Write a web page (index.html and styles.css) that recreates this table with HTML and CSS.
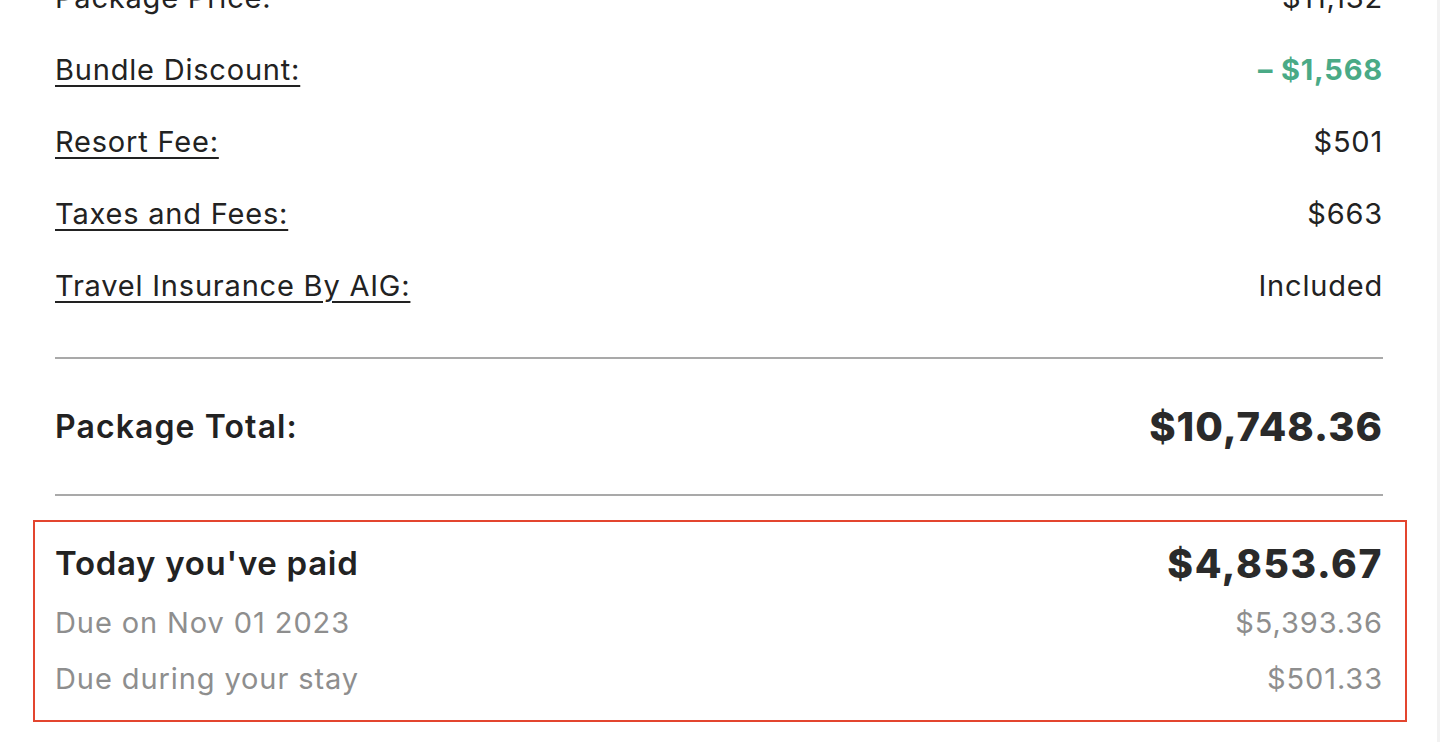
FILE: index.html
```
<!DOCTYPE html>
<html lang="en">
<head>
  <meta charset="UTF-8">
  <title>Package Summary</title>
  <link rel="stylesheet" href="styles.css">
</head>
<body>
  <div class="summary">
    <div class="lines">
      <div class="line"><span class="label plain">Package Price:</span><span>$11,132</span></div>
      <div class="line"><a class="label" href="#">Bundle Discount:</a><span class="discount">&ndash; $1,568</span></div>
      <div class="line"><a class="label" href="#">Resort Fee:</a><span>$501</span></div>
      <div class="line"><a class="label" href="#">Taxes and Fees:</a><span>$663</span></div>
      <div class="line"><a class="label" href="#">Travel Insurance By AIG:</a><span>Included</span></div>
    </div>

    <div class="total">
      <span class="total-label">Package Total:</span>
      <span class="total-amount">$10,748.36</span>
    </div>

    <div class="paid-box">
      <div class="paid-row">
        <span class="paid-label">Today you've paid</span>
        <span class="paid-amount">$4,853.67</span>
      </div>
      <div class="due-row">
        <span>Due on Nov 01 2023</span>
        <span>$5,393.36</span>
      </div>
      <div class="due-row">
        <span>Due during your stay</span>
        <span>$501.33</span>
      </div>
    </div>
  </div>
</body>
</html>
```

FILE: styles.css
```
body {
  margin: 0;
  padding: 0;
  background: #fff;
  font-family: Inter, 'Noto Sans', sans-serif;
  color: #222;
  overflow: hidden;
}

.summary {
  margin: -21px 0 0 0;
  padding: 0 54px 0 55px;
  height: 800px;
  border-right: 3px solid #f2f2f2;
}

.lines {
  display: flex;
  flex-direction: column;
  gap: 36px;
  padding-bottom: 54px;
  border-bottom: 2px solid #a9a9a9;
}

.line {
  display: flex;
  justify-content: space-between;
  align-items: center;
  height: 36px;
  font-size: 29px;
  letter-spacing: 0.8px;
}

.label {
  color: #222;
  text-decoration: underline;
  text-decoration-thickness: 2px;
  text-underline-offset: 5px;
}

.label.plain {
  text-decoration: none;
}

.discount {
  color: #4aaa86;
  font-weight: 700;
}

.total {
  display: flex;
  justify-content: space-between;
  align-items: center;
  height: 135px;
  border-bottom: 2px solid #a9a9a9;
}

.total-label {
  font-size: 32px;
  font-weight: 600;
  letter-spacing: 1.1px;
}

.total-amount {
  font-size: 40px;
  font-weight: 800;
  letter-spacing: 1px;
  color: #2a2a2a;
}

.paid-box {
  margin: 24px -24px 0 -22px;
  padding: 16px 22px 14px 20px;
  border: 2px solid #e3452f;
}

.paid-row {
  display: flex;
  justify-content: space-between;
  align-items: center;
  height: 50px;
  margin-bottom: 6px;
}

.paid-label {
  font-size: 33px;
  font-weight: 600;
  letter-spacing: 0.7px;
}

.paid-amount {
  font-size: 39px;
  font-weight: 800;
  letter-spacing: 1.6px;
  color: #2a2a2a;
}

.due-row {
  display: flex;
  justify-content: space-between;
  align-items: center;
  height: 56px;
  font-size: 29px;
  letter-spacing: 0.9px;
  color: #8e8e8e;
}
```
